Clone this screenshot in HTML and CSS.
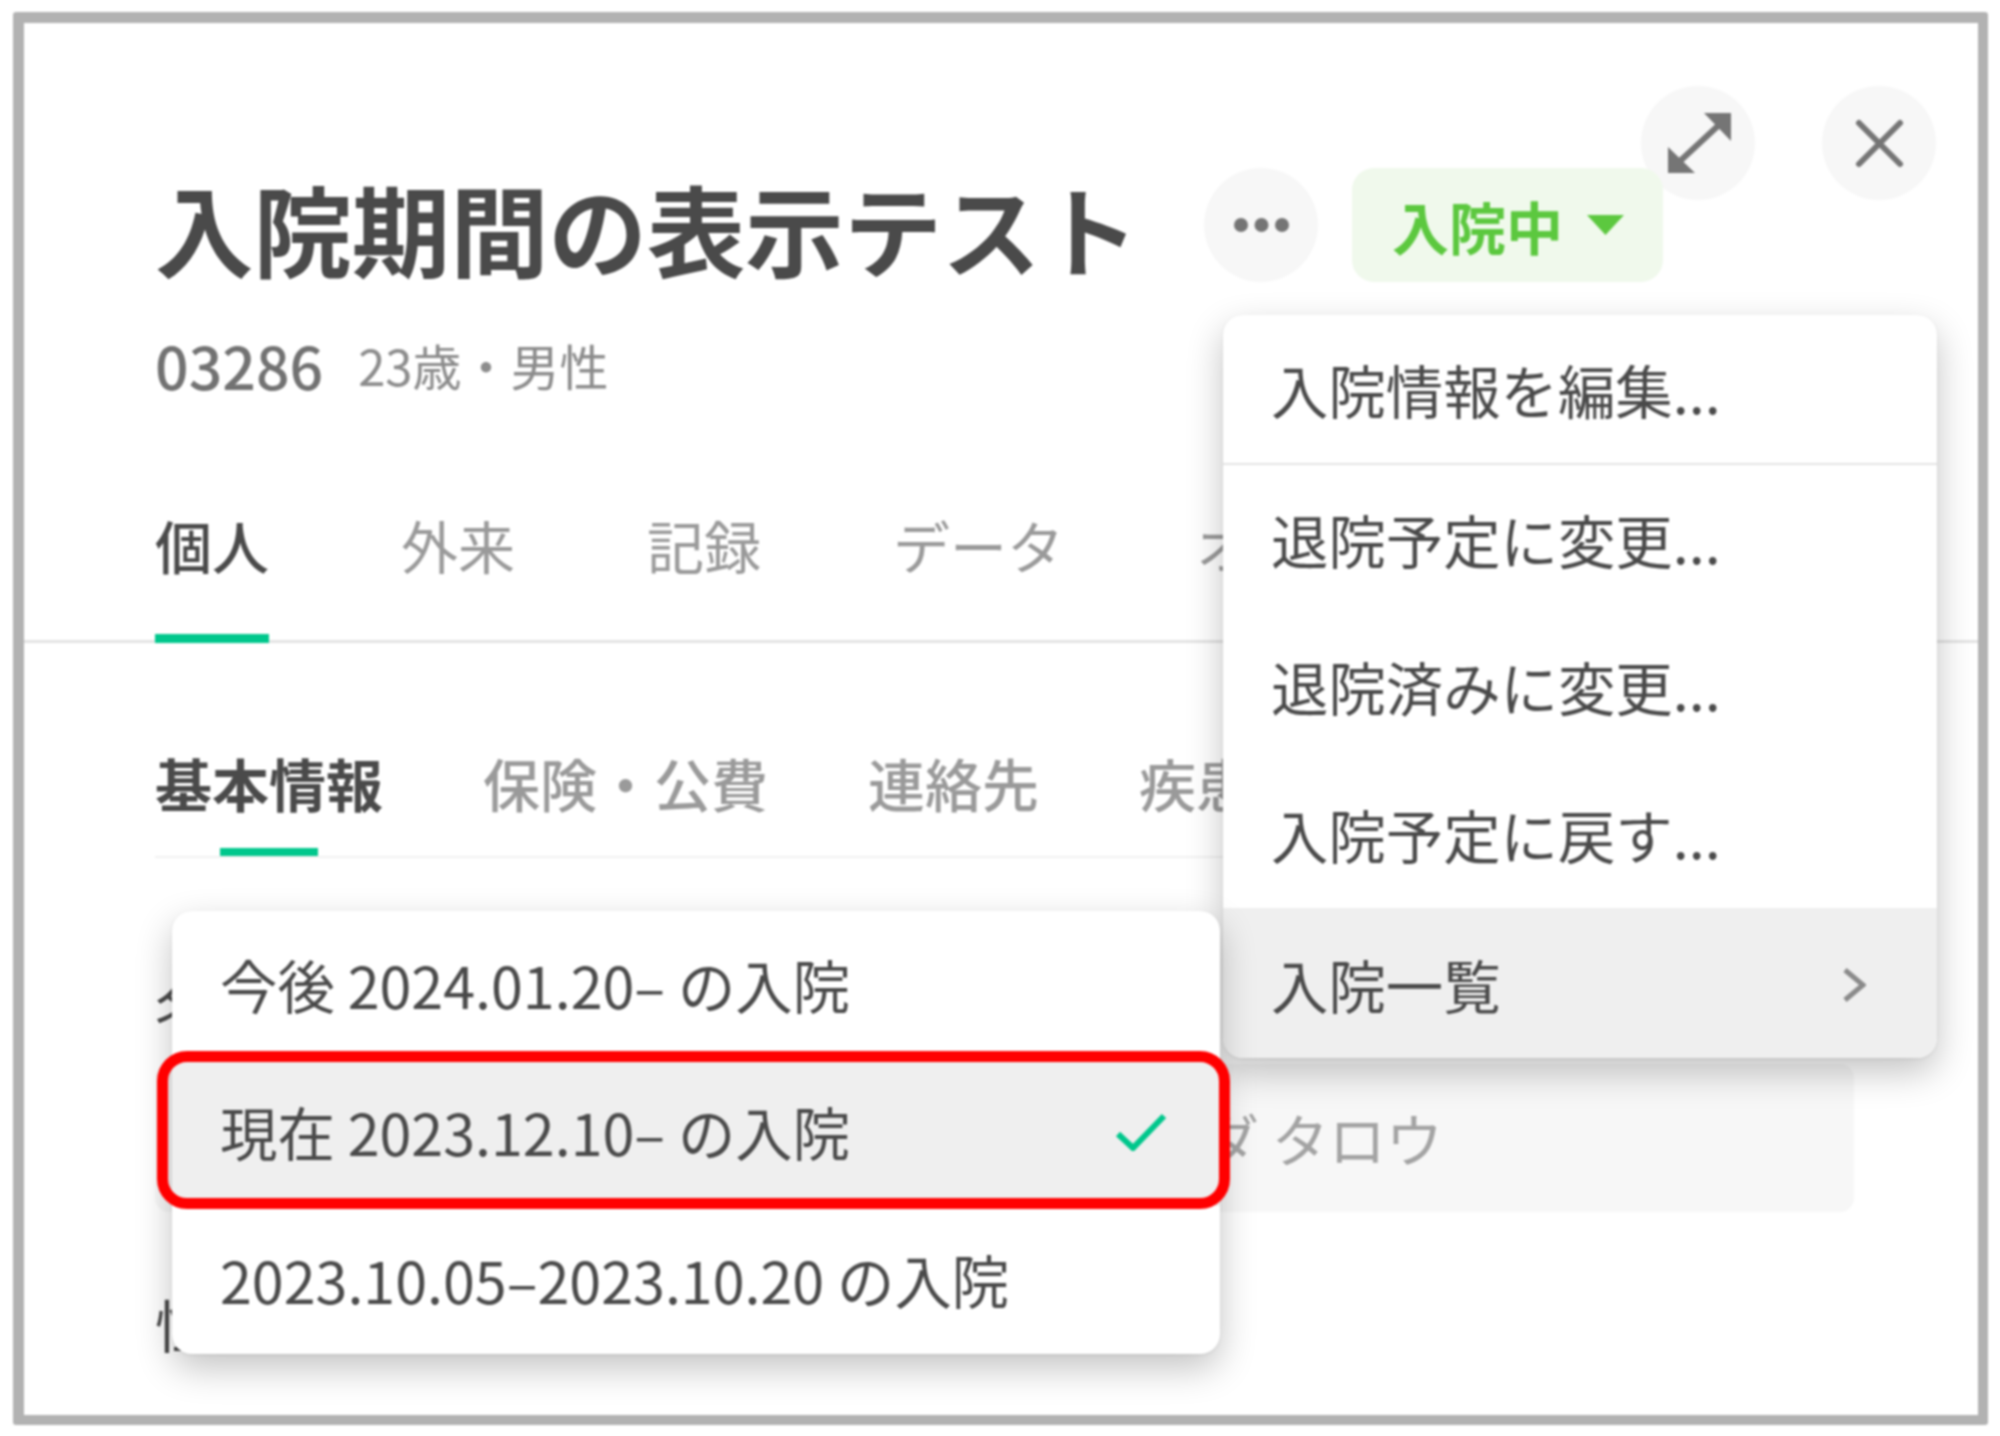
FILE: index.html
```html
<!DOCTYPE html>
<html lang="ja">
<head>
<meta charset="utf-8">
<title>入院期間の表示テスト</title>
<link rel="stylesheet" href="styles.css">
</head>
<body>
<main class="frame">
  <div class="window-actions">
    <button class="round-btn" aria-label="expand">
      <svg class="icon" viewBox="0 0 114 114"><path class="icon-line" d="M38 76 L79 38"/><path class="icon-fill" d="M63 27H90V55Z"/><path class="icon-fill" d="M27 61V87H54Z"/></svg>
    </button>
    <button class="round-btn" aria-label="close">
      <svg class="icon" viewBox="0 0 114 114"><path class="icon-line icon-round" d="M37 37 L78 78 M78 37 L37 78"/></svg>
    </button>
  </div>

  <header class="patient">
    <div class="title-row">
      <h1 class="title">入院期間の表示テスト</h1>
      <button class="round-btn more" aria-label="more">
        <svg class="icon" viewBox="0 0 114 114"><circle class="icon-fill" cx="37" cy="57" r="7"/><circle class="icon-fill" cx="57.5" cy="57" r="7"/><circle class="icon-fill" cx="78" cy="57" r="7"/></svg>
      </button>
      <button class="status">入院中<svg class="caret" viewBox="0 0 37 20"><path d="M0 0H37L18.5 20Z"/></svg></button>
    </div>
    <div class="meta"><span class="patient-id">03286</span><span class="patient-info">23歳・男性</span></div>
  </header>

  <nav class="tabs">
    <a class="tab tab-active">個人</a>
    <a class="tab">外来</a>
    <a class="tab">記録</a>
    <a class="tab">データ</a>
    <a class="tab">オーダー</a>
  </nav>

  <nav class="subtabs">
    <a class="subtab subtab-active">基本情報</a>
    <a class="subtab">保険・公費</a>
    <a class="subtab">連絡先</a>
    <a class="subtab">疾患</a>
  </nav>

  <section class="form">
    <div class="label">名前</div>
    <div class="field">ヤマダ タロウ</div>
    <div class="label label-next">性別</div>
  </section>

  <ul class="menu menu-actions">
    <li class="menu-item menu-item-first">入院情報を編集...</li>
    <li class="menu-item">退院予定に変更...</li>
    <li class="menu-item">退院済みに変更...</li>
    <li class="menu-item">入院予定に戻す...</li>
    <li class="menu-item menu-item-hover menu-item-last">入院一覧
      <svg class="chevron" viewBox="0 0 24 36"><path d="M3 3L21 18L3 33"/></svg>
    </li>
  </ul>

  <ul class="menu menu-admissions">
    <li class="menu-item">今後 2024.01.20– の入院</li>
    <li class="menu-item menu-item-hover menu-item-marked">現在 2023.12.10– の入院
      <svg class="check" viewBox="0 0 52 38"><path d="M3 21L18 35L49 3"/></svg>
    </li>
    <li class="menu-item">2023.10.05–2023.10.20 の入院</li>
  </ul>
</main>
</body>
</html>
```
FILE: styles.css
```css
* { box-sizing: border-box; }
html, body { margin: 0; padding: 0; background: #fff; }
body {
  font-family: "Noto Sans CJK JP", "Noto Sans", sans-serif;
  color: #4a4a4a;
  width: 2000px;
  height: 1436px;
  overflow: hidden;
}
button { font: inherit; border: 0; padding: 0; }
ul { list-style: none; margin: 0; padding: 0; }

.frame {
  position: relative;
  width: 1975px;
  height: 1413px;
  margin: 12px 0 0 13px;
  border: 11px solid #b2b2b2;
  border-width: 11px 10px 10px 11px;
  border-radius: 3px;
  overflow: hidden;
  background: #fff;
  filter: blur(1px);
}

.round-btn {
  flex: none;
  display: block;
  width: 114px;
  height: 114px;
  border-radius: 50%;
  background: #f7f7f7;
}
.icon { display: block; width: 114px; height: 114px; }
.icon-fill { fill: #757575; }
.icon-line { fill: none; stroke: #757575; stroke-width: 6; }
.icon-round { stroke-linecap: round; }

.window-actions {
  position: absolute;
  top: 63px;
  right: 42px;
  display: flex;
  gap: 67px;
}

.patient { padding: 145px 0 0 131px; }
.title-row { position: relative; display: flex; align-items: center; height: 114px; }
.title {
  margin: 0;
  width: 972px;
  padding-top: 4px;
  font-size: 98.4px;
  line-height: 114px;
  font-weight: 700;
  white-space: nowrap;
}
.more { margin-left: 77px; }
.status {
  position: relative;
  display: flex;
  align-items: center;
  margin-left: 34px;
  width: 311px;
  height: 114px;
  padding-left: 40px;
  border-radius: 22px;
  background: #f0f9ec;
  color: #5cc83f;
  font-size: 57px;
  font-weight: 700;
}
.caret { display: block; width: 37px; height: 20px; margin-left: 24px; fill: #5cc83f; }

.meta {
  display: flex;
  align-items: center;
  gap: 35px;
  height: 60px;
  margin-top: 52px;
  color: #727272;
}
.patient-id { font-size: 59px; font-weight: 500; }
.patient-info { font-size: 49px; color: #8c8c8c; }

.tabs {
  display: flex;
  gap: 132px;
  margin-top: 110px;
  padding-left: 131px;
  box-shadow: inset 0 -3px 0 #e4e4e4;
}
.tab {
  display: block;
  height: 139px;
  padding-bottom: 50px;
  border-bottom: 9px solid transparent;
  font-size: 57px;
  line-height: 80px;
  color: #9a9a9a;
  white-space: nowrap;
}
.tab-active { color: #4a4a4a; font-weight: 500; border-bottom-color: #00c78c; }

.subtabs {
  display: flex;
  gap: 100px;
  margin: 99px 124px 0 131px;
  padding-bottom: 2px;
  box-shadow: inset 0 -2px 0 #f1f1f1;
}
.subtab {
  display: block;
  font-size: 57px;
  line-height: 80px;
  font-weight: 500;
  color: #9a9a9a;
  white-space: nowrap;
}
.subtab::after {
  content: "";
  display: block;
  width: 98px;
  height: 8px;
  margin: 26px auto 0;
}
.subtab-active { color: #4a4a4a; font-weight: 700; }
.subtab-active::after { background: #00c78c; }

.form { margin: 107px 124px 0 131px; }
.label { font-size: 57px; line-height: 80px; }
.label-next { margin-top: 71px; }
.field {
  height: 148px;
  margin-top: 19px;
  padding-left: 933px;
  border-radius: 14px;
  background: #f7f7f7;
  color: #a3a3a3;
  font-size: 57px;
  line-height: 146px;
  white-space: nowrap;
}

.menu {
  position: absolute;
  overflow: visible;
  border-radius: 20px;
  background: #fff;
  box-shadow: 0 14px 36px rgba(0, 0, 0, 0.24), 0 1px 3px rgba(0, 0, 0, 0.08);
}
.menu-actions { top: 292px; left: 1199px; width: 714px; }
.menu-admissions { top: 888px; left: 148px; width: 1048px; }
.menu-item {
  position: relative;
  display: flex;
  align-items: center;
  justify-content: space-between;
  height: 147.5px;
  padding: 0 51px 0 48px;
  font-size: 57.4px;
  white-space: nowrap;
}
.menu-admissions .menu-item { padding-bottom: 2px; }
.menu-item:first-child { border-radius: 20px 20px 0 0; }
.menu-item:last-child { border-radius: 0 0 20px 20px; }
.menu-item-first { height: 150px; border-bottom: 2px solid #e4e4e4; }
.menu-item-last { height: 150px; padding-top: 2px; }
.menu-item-hover { background: #efefef; }
.menu-item-marked::after {
  content: "";
  position: absolute;
  top: -8px;
  right: -10px;
  bottom: -3px;
  left: -15px;
  border: 11px solid #ff0000;
  border-radius: 30px;
}
.chevron { display: block; width: 24px; height: 36px; margin: 3px 20px 0 0; fill: none; stroke: #8a8a8a; stroke-width: 5; }
.check { display: block; width: 52px; height: 38px; margin: 2px 2px 0 0; fill: none; stroke: #00c78c; stroke-width: 6; }
```
